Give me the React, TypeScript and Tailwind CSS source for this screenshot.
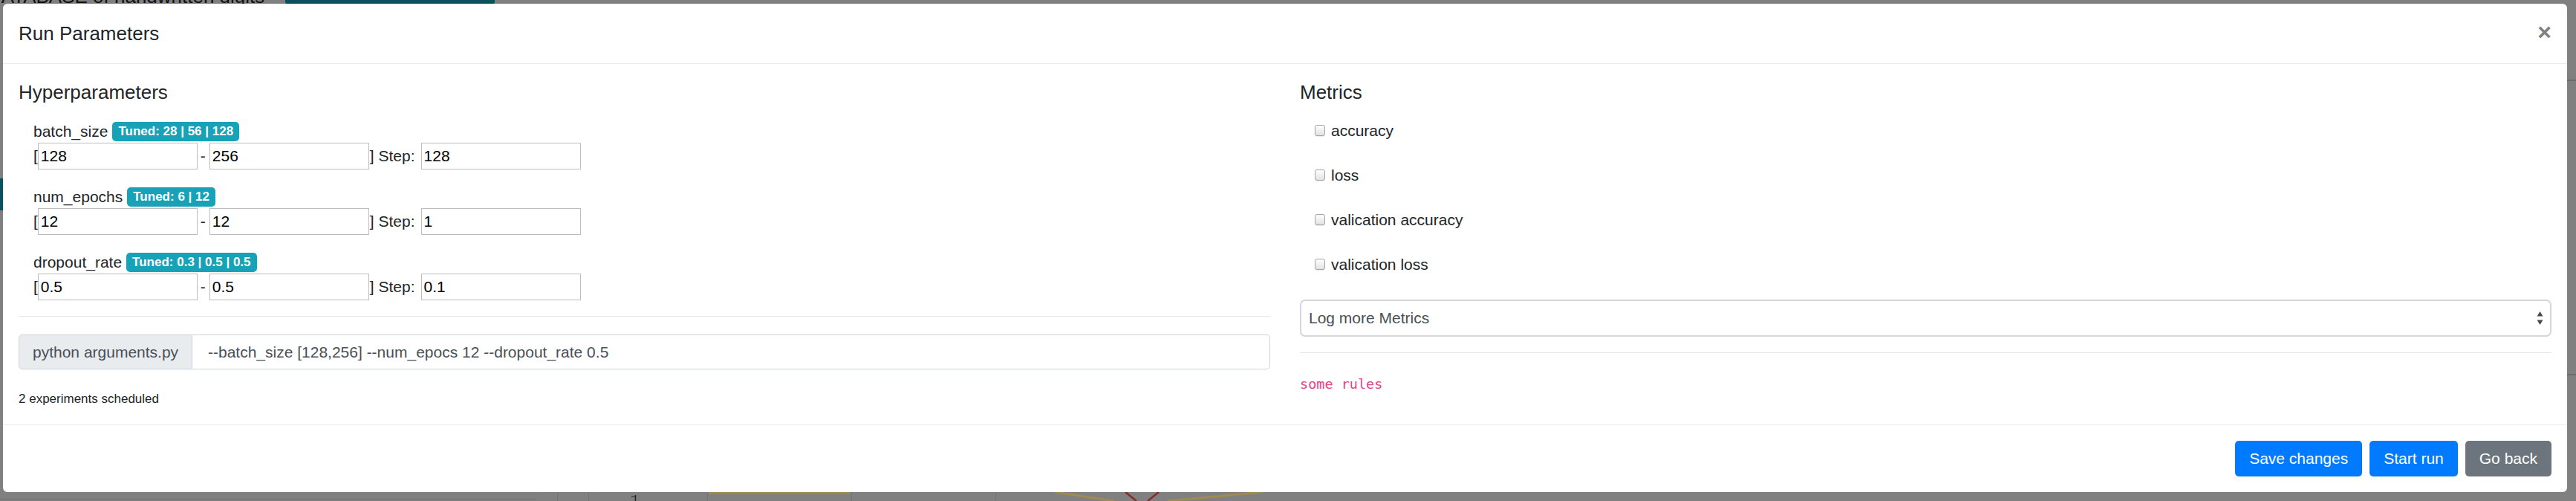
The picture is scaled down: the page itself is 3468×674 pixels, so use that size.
import React from 'react'

interface Param {
  name: string
  tuned: string
  min: string
  max: string
  step: string
}

const params: Param[] = [
  { name: 'batch_size', tuned: '28 | 56 | 128', min: '128', max: '256', step: '128' },
  { name: 'num_epochs', tuned: '6 | 12', min: '12', max: '12', step: '1' },
  { name: 'dropout_rate', tuned: '0.3 | 0.5 | 0.5', min: '0.5', max: '0.5', step: '0.1' },
]

const metrics = ['accuracy', 'loss', 'valication accuracy', 'valication loss']

function NumInput({ value }: { value: string }) {
  return (
    <input
      readOnly
      value={value}
      className="w-[215px] h-[36px] border border-[#bdbdbd] bg-white pl-[3px] text-[21px] text-black outline-none"
    />
  )
}

function ParamGroup({ p }: { p: Param }) {
  return (
    <div>
      <div className="h-[31px] flex items-center gap-[6px] text-[21px] text-[#212529]">
        <span>{p.name}</span>
        <span className="h-[26px] px-[8px] flex items-center rounded-[5px] bg-[#17a2b8] text-white text-[17px] font-bold">
          Tuned: {p.tuned}
        </span>
      </div>
      <div className="h-[36px] flex items-center text-[21px] text-[#212529]">
        <span>[</span>
        <NumInput value={p.min} />
        <span className="ml-[4px] mr-[5px]">-</span>
        <NumInput value={p.max} />
        <span className="ml-[1px] mr-[8px] whitespace-pre">] Step:</span>
        <NumInput value={p.step} />
      </div>
    </div>
  )
}

function Checkbox() {
  return (
    <span className="w-[14px] h-[15px] rounded-[3px] border border-[#a3a3a3] bg-gradient-to-b from-white to-[#e2e2e2] shadow-[0_1px_0_rgba(0,0,0,0.08)]" />
  )
}

function Backdrop() {
  return (
    <>
      {/* page behind the overlay, only slivers visible */}
      <div className="absolute left-[-17px] top-[-18px] text-[26px] leading-[26px] text-[#111] whitespace-nowrap">
        DATABASE of handwritten digits
      </div>
      <div className="absolute left-[384px] top-[-30px] w-[282px] h-[36px] rounded-[4px] bg-[#0b515c] text-[#8aa3a6] text-[24px] font-bold flex items-end pb-[1px] px-[8px] whitespace-nowrap">
        Status: 12/13 Experiments finished
      </div>
      <div className="absolute left-0 top-[240px] w-[4px] h-[43px] bg-[#0b515c]" />
      <div className="absolute right-0 top-[107px] w-[12px] h-[2px] bg-[#6a6a6a]" />
      <div className="absolute right-0 top-[503px] w-[12px] h-[2px] bg-[#6a6a6a]" />
      <svg className="absolute left-0 top-[662px]" width="3468" height="12">
        <line x1="0" y1="9.5" x2="721" y2="9.5" stroke="#737373" strokeWidth="1.5" />
        {[750, 792, 952, 1146, 1340].map(x => (
          <line key={x} x1={x + 0.5} y1="0" x2={x + 0.5} y2="12" stroke="#747474" />
        ))}
        <line x1="855.5" y1="4" x2="855.5" y2="12" stroke="#222" strokeWidth="1.5" />
        <line x1="850" y1="6" x2="855" y2="6" stroke="#222" />
        <line x1="954" y1="1" x2="1144" y2="1" stroke="#a08a50" strokeWidth="3" />
        <line x1="1420" y1="0" x2="1500" y2="12" stroke="#a08a50" strokeWidth="3" />
        <line x1="1515" y1="0" x2="1530" y2="12" stroke="#8b2a2a" strokeWidth="2.5" />
        <line x1="1560" y1="0" x2="1545" y2="12" stroke="#8b2a2a" strokeWidth="2.5" />
        <line x1="1572" y1="12" x2="1700" y2="0" stroke="#a08a50" strokeWidth="3" />
      </svg>
    </>
  )
}

export default function App() {
  return (
    <div className="relative w-[3468px] h-[674px] overflow-hidden bg-[#808080] font-['Liberation_Sans',Arial,sans-serif]">
      <Backdrop />

      <div className="relative ml-[4px] mt-[5px] w-[3452px] h-[657px] bg-white rounded-[6px] flex flex-col">
        {/* header */}
        <div className="h-[81px] shrink-0 flex items-center justify-between px-[21px] border-b border-[#e9ecef]">
          <h5 className="text-[26px] leading-[39px] text-[#212529]">Run Parameters</h5>
          <span className="text-[32px] font-bold leading-none text-[#808080] -mt-[4px]">×</span>
        </div>

        {/* body */}
        <div className="flex-1 p-[21px] grid grid-cols-2 gap-x-[40px]">
          <div>
            <h5 className="pt-[2px] text-[26px] leading-[31px] text-[#212529]">Hyperparameters</h5>
            <div className="mt-[21px] pl-[20px] flex flex-col gap-[21px]">
              {params.map(p => <ParamGroup key={p.name} p={p} />)}
            </div>
            <div className="mt-[21px] border-t border-[#e5e5e5]" />
            <div className="mt-[24px] h-[47px] flex text-[21px] text-[#495057]">
              <div className="w-[234px] flex items-center px-[18px] bg-[#e9ecef] border border-[#ced4da] rounded-l-[5px] whitespace-nowrap">
                python arguments.py
              </div>
              <div className="flex-1 flex items-center pl-[21px] border border-l-0 border-[#ced4da] rounded-r-[5px] whitespace-nowrap">
                --batch_size [128,256] --num_epocs 12 --dropout_rate 0.5
              </div>
            </div>
            <p className="mt-[27px] text-[17px] leading-[25px] text-[#212529]">2 experiments scheduled</p>
          </div>

          <div>
            <h5 className="pt-[2px] text-[26px] leading-[31px] text-[#212529]">Metrics</h5>
            <div className="mt-[20px] pl-[20px] flex flex-col gap-[29px]">
              {metrics.map(m => (
                <label key={m} className="h-[31px] flex items-center gap-[8px] text-[21px] text-[#212529]">
                  <Checkbox />
                  <span>{m}</span>
                </label>
              ))}
            </div>
            <div className="mt-[32px] h-[50px] flex items-center justify-between pl-[10px] pr-[9px] border-2 border-[#d3d7dc] rounded-[7px] text-[21px] text-[#495057]">
              <span>Log more Metrics</span>
              <svg width="9" height="20" viewBox="0 0 9 20">
                <path d="M4.5 1 L8.5 7.5 L0.5 7.5 Z" fill="#4a4a4a" />
                <path d="M4.5 19 L8.5 12.5 L0.5 12.5 Z" fill="#4a4a4a" />
              </svg>
            </div>
            <div className="mt-[21px] border-t border-[#e5e5e5]" />
            <p className="mt-[26px] leading-[31px]">
              <code className="text-[18.5px] text-[#e83e8c] font-['DejaVu_Sans_Mono',monospace]">some rules</code>
            </p>
          </div>
        </div>

        {/* footer */}
        <div className="h-[91px] shrink-0 border-t border-[#e9ecef] flex items-center justify-end gap-[10px] px-[21px]">
          <button className="h-[48px] px-[19px] rounded-[5px] bg-[#007bff] text-white text-[21px]">Save changes</button>
          <button className="h-[48px] px-[19px] rounded-[5px] bg-[#007bff] text-white text-[21px]">Start run</button>
          <button className="h-[48px] px-[19px] rounded-[5px] bg-[#6c757d] text-white text-[21px]">Go back</button>
        </div>
      </div>
    </div>
  )
}
